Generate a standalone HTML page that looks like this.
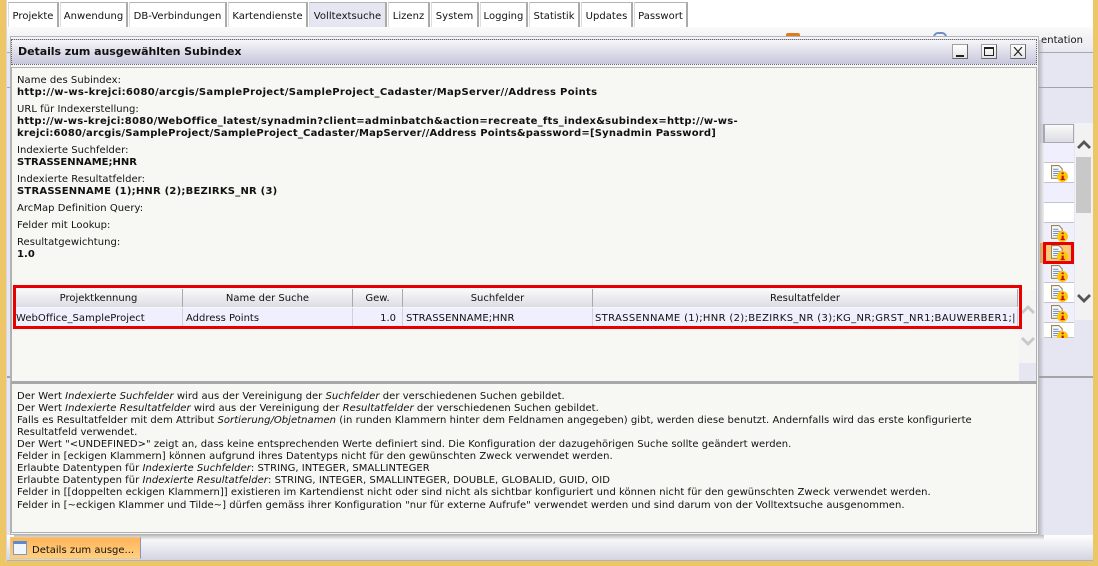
<!DOCTYPE html>
<html><head><meta charset="utf-8">
<style>
html,body{margin:0;padding:0}
body{width:1098px;height:566px;overflow:hidden;position:relative;background:#edc668;font-family:"DejaVu Sans",sans-serif;font-size:10px;color:#111}
div{position:absolute;box-sizing:border-box}
.t{white-space:nowrap;line-height:12px;letter-spacing:.04px}
.tab{top:2px;height:25px;background:#fff;border:1px solid #b4b4b4;border-width:1px 2px 0 1px;border-right-color:#aaa;text-align:center;line-height:27px;white-space:nowrap;letter-spacing:.03px;border-left:1px solid #ddd}
.th{top:289px;height:18px;background:linear-gradient(#fafafa,#dcdce4);border-right:1px solid #a8a8b0;text-align:center;line-height:19px;white-space:nowrap}
.td{top:308px;height:19px;background:#efeffd;border-right:1px solid #d0d0d8;line-height:22px;white-space:nowrap;padding-left:2px}
.b{font-weight:bold}
.wb{top:44px;width:16px;height:15px;background:linear-gradient(#fff,#e4e4e8);border:1px solid #a0a0a0;border-right-color:#666;border-bottom-color:#666}
.row{left:1044px;width:30px;height:20px;border-bottom:1px solid #c4c4cc}
svg{position:absolute}
</style></head><body>
<div style="left:6px;top:0;width:1087px;height:561px;background:#e6e6f2"></div>
<div style="left:6px;top:0;width:1087px;height:27px;background:#fff"></div>
<div style="left:6px;top:27px;width:1087px;height:26px;background:linear-gradient(#fafafa,#e8e8f0);border-bottom:1px solid #a8a8a8"></div>
<div style="left:6px;top:87px;width:1087px;height:1px;background:#a4a4a8"></div>
<div style="left:6px;top:376px;width:1087px;height:2px;background:#a4a4a8"></div>

<div class="tab" style="left:8px;width:51px">Projekte</div>
<div class="tab" style="left:60px;width:68px">Anwendung</div>
<div class="tab" style="left:129px;width:98px">DB-Verbindungen</div>
<div class="tab" style="left:228px;width:80px">Kartendienste</div>
<div class="tab" style="left:309px;width:78px;background:#e6e6f2">Volltextsuche</div>
<div class="tab" style="left:388px;width:42px">Lizenz</div>
<div class="tab" style="left:431px;width:48px">System</div>
<div class="tab" style="left:480px;width:48px">Logging</div>
<div class="tab" style="left:529px;width:51px">Statistik</div>
<div class="tab" style="left:581px;width:52px">Updates</div>
<div class="tab" style="left:634px;width:54px">Passwort</div>

<div class="t" style="left:1041px;top:35px">entation</div>
<div style="left:786px;top:33px;width:14px;height:4px;background:#e07a20;border-radius:2px 2px 0 0"></div>
<div style="left:933px;top:32px;width:14px;height:5px;border:2px solid #6f8fc8;border-bottom:0;border-radius:7px 7px 0 0"></div>

<!-- right grid -->
<div style="left:1044px;top:124px;width:30px;height:19px;background:linear-gradient(#fafafa,#dcdce4);border:1px solid #a8a8b0"></div>
<div style="left:1040px;top:124px;width:4px;height:19px;background:#dcdce4;border-right:1px solid #a8a8b0"></div>
<div style="left:1040px;top:143px;width:4px;height:195px;background:#eee"></div>
<div class="row" style="top:143px;background:#efeffd"></div>
<div class="row" style="top:163px;background:#fff"></div>
<div class="row" style="top:183px;background:#efeffd"></div>
<div class="row" style="top:203px;background:#fff"></div>
<div class="row" style="top:223px;background:#efeffd"></div>
<div class="row" style="top:243px;background:#fdc77a"></div>
<div class="row" style="top:263px;background:#efeffd"></div>
<div class="row" style="top:283px;background:#fff"></div>
<div class="row" style="top:303px;background:#efeffd"></div>
<div class="row" style="top:323px;height:15px;background:#fff;overflow:hidden"></div>
<div style="left:1040px;top:243px;width:4px;height:20px;background:#eeb050"></div>

<svg width="0" height="0" style="position:absolute"><defs><symbol id="ic" viewBox="0 0 16 16">
<path d="M.5 .5H7.5L10.5 3.5V12.5H.5Z" fill="#fafafa" stroke="#9a8450"/>
<path d="M2 4H7M2 6H9M2 8H8M2 10H7" stroke="#6a8cc8"/>
<circle cx="10.8" cy="10.8" r="5.2" fill="#fcc80c"/>
<path d="M10 7h2v1.6h-2zM10 10h2v3h1v1.2h-4V13h1z" fill="#c80a0a"/>
</symbol></defs></svg>
<svg style="left:1051px;top:165px" width="17" height="17"><use href="#ic"/></svg>
<svg style="left:1051px;top:225px" width="17" height="17"><use href="#ic"/></svg>
<svg style="left:1051px;top:245px" width="17" height="17"><use href="#ic"/></svg>
<svg style="left:1051px;top:265px" width="17" height="17"><use href="#ic"/></svg>
<svg style="left:1051px;top:285px" width="17" height="17"><use href="#ic"/></svg>
<svg style="left:1051px;top:305px" width="17" height="17"><use href="#ic"/></svg>
<svg style="left:1051px;top:325px" width="17" height="13" viewBox="0 0 17 13"><use href="#ic" width="17" height="17"/></svg>
<div style="left:1043px;top:242px;width:31px;height:22px;border:3px solid #e80000"></div>

<!-- right scrollbar -->
<div style="left:1075px;top:123px;width:18px;height:197px;background:#f2f2f2"></div>
<div style="left:1076px;top:157px;width:15px;height:56px;background:#c8c8c8"></div>
<svg style="left:1076px;top:139px" width="16" height="12"><path d="M2 9L8 3L14 9" fill="none" stroke="#555" stroke-width="2.8"/></svg>
<svg style="left:1076px;top:292px" width="16" height="12"><path d="M2 3L8 9L14 3" fill="none" stroke="#555" stroke-width="2.8"/></svg>

<!-- window -->
<div style="left:1039px;top:40px;width:5px;height:498px;background:linear-gradient(90deg,rgba(150,150,165,.55),rgba(200,200,215,0))"></div>
<div style="left:10px;top:36px;width:1029px;height:499px;background:#f4f4f6;border:1px solid #b4b4b4"></div>
<div style="left:11px;top:39px;width:1026px;height:26px;background:linear-gradient(#f6f6f9,#c6c6dc);border:1px dotted #666"></div>
<div class="t b" style="left:18px;top:45px;font-size:11px;line-height:14px;color:#111;letter-spacing:-.05px">Details zum ausgewählten Subindex</div>
<div class="wb" style="left:952px"><div style="left:3px;top:10px;width:8px;height:2px;background:#222"></div></div>
<div class="wb" style="left:981px"><div style="left:2px;top:2px;width:10px;height:9px;border:1px solid #222;border-top-width:2px"></div></div>
<div class="wb" style="left:1010px"><svg style="left:2px;top:2px" width="10" height="9"><path d="M1 0L9 9M9 0L1 9" stroke="#222" stroke-width="1.2"/></svg></div>

<div style="left:11px;top:67px;width:1026px;height:315px;background:#f7f8f3;border:1px solid #b0b0b0;border-bottom:0"></div>
<div class="t" style="left:17px;top:75px">Name des Subindex:</div>
<div class="t b" style="left:17px;top:87px;letter-spacing:.31px">http://w-ws-krejci:6080/arcgis/SampleProject/SampleProject_Cadaster/MapServer//Address Points</div>
<div class="t" style="left:17px;top:104px">URL für Indexerstellung:</div>
<div class="t b" style="left:17px;top:116px;letter-spacing:.25px">http://w-ws-krejci:8080/WebOffice_latest/synadmin?client=adminbatch&amp;action=recreate_fts_index&amp;subindex=http://w-ws-</div>
<div class="t b" style="left:17px;top:128px;letter-spacing:.2px">krejci:6080/arcgis/SampleProject/SampleProject_Cadaster/MapServer//Address Points&amp;password=[Synadmin Password]</div>
<div class="t" style="left:17px;top:145px">Indexierte Suchfelder:</div>
<div class="t b" style="left:17px;top:157px;letter-spacing:0">STRASSENNAME;HNR</div>
<div class="t" style="left:17px;top:174px">Indexierte Resultatfelder:</div>
<div class="t b" style="left:17px;top:186px;letter-spacing:.22px">STRASSENNAME (1);HNR (2);BEZIRKS_NR (3)</div>
<div class="t" style="left:17px;top:203px">ArcMap Definition Query:</div>
<div class="t" style="left:17px;top:220px">Felder mit Lookup:</div>
<div class="t" style="left:17px;top:237px">Resultatgewichtung:</div>
<div class="t b" style="left:17px;top:249px">1.0</div>

<!-- inner table -->
<div style="left:1019px;top:290px;width:17px;height:90px;background:#f4f4f4"></div>
<div style="left:1019px;top:363px;width:17px;height:18px;background:#e6e6f2"></div>
<svg style="left:1020px;top:304px" width="16" height="12"><path d="M2 9L8 3L14 9" fill="none" stroke="#c8c8c8" stroke-width="2.8"/></svg>
<svg style="left:1020px;top:335px" width="16" height="12"><path d="M2 3L8 9L14 3" fill="none" stroke="#c8c8c8" stroke-width="2.8"/></svg>
<div class="th" style="left:15px;width:168px">Projektkennung</div>
<div class="th" style="left:183px;width:170px">Name der Suche</div>
<div class="th" style="left:353px;width:50px">Gew.</div>
<div class="th" style="left:403px;width:190px">Suchfelder</div>
<div class="th" style="left:593px;width:425px">Resultatfelder</div>
<div class="td" style="left:15px;width:168px;padding-left:1px;letter-spacing:.04px">WebOffice_SampleProject</div>
<div class="td" style="left:183px;width:170px;padding-left:3px">Address Points</div>
<div class="td" style="left:353px;width:50px;text-align:right;padding-right:6px">1.0</div>
<div class="td" style="left:403px;width:190px;padding-left:3px;letter-spacing:.1px">STRASSENNAME;HNR</div>
<div class="td" style="left:593px;width:425px;letter-spacing:.33px">STRASSENNAME (1);HNR (2);BEZIRKS_NR (3);KG_NR;GRST_NR1;BAUWERBER1;|</div>
<div style="left:13px;top:285px;width:1009px;height:44px;border:3px solid #e80000"></div>

<div style="left:11px;top:381px;width:1026px;height:3px;background:#a8a8a8"></div>
<div style="left:11px;top:384px;width:1026px;height:149px;background:#f7f8f3;border:1px solid #b0b0b0;border-top:0"></div>
<div class="t" style="left:17px;top:391px">Der Wert <i>Indexierte Suchfelder</i> wird aus der Vereinigung der <i>Suchfelder</i> der verschiedenen Suchen gebildet.</div>
<div class="t" style="left:17px;top:403px">Der Wert <i>Indexierte Resultatfelder</i> wird aus der Vereinigung der <i>Resultatfelder</i> der verschiedenen Suchen gebildet.</div>
<div class="t" style="left:17px;top:415px">Falls es Resultatfelder mit dem Attribut <i>Sortierung/Objetnamen</i> (in runden Klammern hinter dem Feldnamen angegeben) gibt, werden diese benutzt. Andernfalls wird das erste konfigurierte</div>
<div class="t" style="left:17px;top:427px">Resultatfeld verwendet.</div>
<div class="t" style="left:17px;top:439px">Der Wert "&lt;UNDEFINED&gt;" zeigt an, dass keine entsprechenden Werte definiert sind. Die Konfiguration der dazugehörigen Suche sollte geändert werden.</div>
<div class="t" style="left:17px;top:451px">Felder in [eckigen Klammern] können aufgrund ihres Datentyps nicht für den gewünschten Zweck verwendet werden.</div>
<div class="t" style="left:17px;top:463px">Erlaubte Datentypen für <i>Indexierte Suchfelder</i>: STRING, INTEGER, SMALLINTEGER</div>
<div class="t" style="left:17px;top:475px">Erlaubte Datentypen für <i>Indexierte Resultatfelder</i>: STRING, INTEGER, SMALLINTEGER, DOUBLE, GLOBALID, GUID, OID</div>
<div class="t" style="left:17px;top:487px">Felder in [[doppelten eckigen Klammern]] existieren im Kartendienst nicht oder sind nicht als sichtbar konfiguriert und können nicht für den gewünschten Zweck verwendet werden.</div>
<div class="t" style="left:17px;top:500px">Felder in [~eckigen Klammer und Tilde~] dürfen gemäss ihrer Konfiguration "nur für externe Aufrufe" verwendet werden und sind darum von der Volltextsuche ausgenommen.</div>

<!-- taskbar -->
<div style="left:6px;top:535px;width:1087px;height:26px;background:linear-gradient(#fff,#d4d4e2);border-bottom:1px solid #b0b0c0"></div>
<div style="left:14px;top:535px;width:1030px;height:5px;background:linear-gradient(#bbb,rgba(220,220,225,0))"></div>
<div style="left:6px;top:0;width:1px;height:561px;background:#d8d8d8"></div>
<div style="left:10px;top:537px;width:131px;height:22px;background:linear-gradient(#ffb45a,#ffd080);border:1px solid #f0c878;border-right:1px solid #9090b8"></div>
<div style="left:13px;top:541px;width:14px;height:14px;background:#f0f6fc;border:1px solid #7a9cc8;border-top:3px solid #5a8ad0"></div>
<div class="t" style="left:32px;top:545px;letter-spacing:0">Details zum ausge...</div>
</body></html>
